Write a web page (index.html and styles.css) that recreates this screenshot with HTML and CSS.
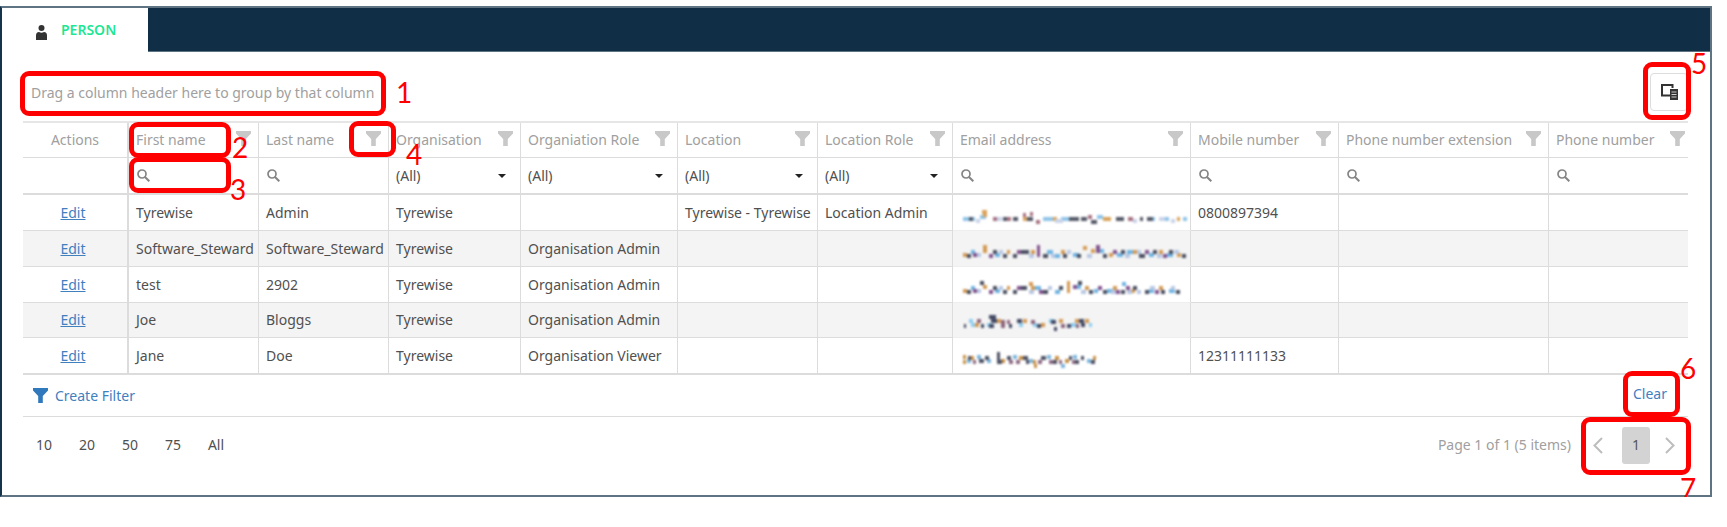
FILE: index.html
```html
<!DOCTYPE html>
<html lang="en">
<head>
	<meta charset="utf-8">
	<title>Person</title>
	<link rel="stylesheet" href="styles.css">
</head>
<body>
	<svg class="sprite" aria-hidden="true">
		<symbol id="funnel" viewBox="0 0 15 15"><path d="M0 0h15v2.6L9.8 8v7H5.2V8L0 2.6z"/></symbol>
		<symbol id="search" viewBox="0 0 13 13"><circle cx="5" cy="5" r="4" fill="none" stroke="currentColor" stroke-width="1.7"/><path d="M8 8l4.3 4.3" stroke="currentColor" stroke-width="2"/></symbol>
		<symbol id="caret" viewBox="0 0 8 4"><path d="M0 0h8L4 4z"/></symbol>
	</svg>

	<div class="panel">
		<div class="tabs">
			<button class="tab" type="button">
				<svg class="person" viewBox="0 0 11 15"><circle cx="5.5" cy="3" r="3"/><path d="M0 15v-4.500q0-3.500 3-3.500 2.500 1.500 5 0 3 0 3 3.500V15z"/></svg>
				PERSON
			</button>
		</div>

		<div class="grid">
			<div class="grouping">
				<span>Drag a column header here to group by that column</span>
				<button class="chooser" type="button" aria-label="Column chooser">
					<svg viewBox="0 0 17 16"><path d="M9 11.500H1V1h10.500v3" fill="none" stroke="#333" stroke-width="2"/><path d="M9 5h8v11H9z" fill="#333"/><path d="M10.500 8h5M10.500 10.500h5M10.500 13h5" stroke="#ccc" stroke-width="1"/></svg>
				</button>
			</div>

			<table>
				<colgroup>
					<col class="c-actions"><col class="c-name"><col class="c-name"><col class="c-org"><col class="c-orgrole"><col class="c-loc"><col class="c-locrole"><col><col class="c-mobile"><col class="c-ext"><col class="c-phone">
				</colgroup>
				<thead>
					<tr>
						<th class="actions">Actions</th>
						<th><div class="head">First name <svg><use href="#funnel"/></svg></div></th>
						<th><div class="head">Last name <svg><use href="#funnel"/></svg></div></th>
						<th><div class="head">Organisation <svg><use href="#funnel"/></svg></div></th>
						<th><div class="head">Organiation Role <svg><use href="#funnel"/></svg></div></th>
						<th><div class="head">Location <svg><use href="#funnel"/></svg></div></th>
						<th><div class="head">Location Role <svg><use href="#funnel"/></svg></div></th>
						<th><div class="head">Email address <svg><use href="#funnel"/></svg></div></th>
						<th><div class="head">Mobile number <svg><use href="#funnel"/></svg></div></th>
						<th><div class="head">Phone number extension <svg><use href="#funnel"/></svg></div></th>
						<th><div class="head">Phone number <svg><use href="#funnel"/></svg></div></th>
					</tr>
					<tr class="filters">
						<td class="actions"></td>
						<td><label class="search"><svg><use href="#search"/></svg><input type="text" aria-label="Filter first name"></label></td>
						<td><label class="search"><svg><use href="#search"/></svg><input type="text" aria-label="Filter last name"></label></td>
						<td><label class="pick"><select aria-label="Filter organisation"><option>(All)</option></select><svg><use href="#caret"/></svg></label></td>
						<td><label class="pick"><select aria-label="Filter organisation role"><option>(All)</option></select><svg><use href="#caret"/></svg></label></td>
						<td><label class="pick"><select aria-label="Filter location"><option>(All)</option></select><svg><use href="#caret"/></svg></label></td>
						<td><label class="pick"><select aria-label="Filter location role"><option>(All)</option></select><svg><use href="#caret"/></svg></label></td>
						<td><label class="search"><svg><use href="#search"/></svg><input type="text" aria-label="Filter email address"></label></td>
						<td><label class="search"><svg><use href="#search"/></svg><input type="text" aria-label="Filter mobile number"></label></td>
						<td><label class="search"><svg><use href="#search"/></svg><input type="text" aria-label="Filter phone extension"></label></td>
						<td><label class="search"><svg><use href="#search"/></svg><input type="text" aria-label="Filter phone number"></label></td>
					</tr>
				</thead>
				<!-- email addresses are masked with a coloured mosaic -->
				<tbody>
					<tr>
						<td class="actions"><a href="#">Edit</a></td><td>Tyrewise</td><td>Admin</td><td>Tyrewise</td><td></td><td>Tyrewise - Tyrewise</td><td>Location Admin</td>
						<td class="email"><svg class="mosaic" viewBox="0 0 226 20">
							<path stroke="#8fc4e8" d="M0 12h12M17 10h6M80 12h12M98 12h10M134 10h6M188 12h4M202 12h4M220 12h4"/>
							<path stroke="#d9a35c" d="M19 5h5M20 8h4M60 12h5M90 12h4M140 12h8M214 12h3"/>
							<path stroke="#555a68" d="M6 12h4M40 12h6M50 12h5M64 12h6M106 12h10M118 12h6M128 15h6M153 12h8M177 12h3M184 12h6"/>
							<path stroke="#a87080" d="M30 12h5M44 12h4M60 8h3M67 7h3M73 15h4M125 10h4M165 12h5"/>
							<path stroke="#c9d3e8" d="M13 14h4M34 12h5M92 14h8M170 14h4M196 12h6M208 14h4"/>
						</svg></td>
						<td>0800897394</td><td></td><td></td>
					</tr>
					<tr>
						<td class="actions"><a href="#">Edit</a></td><td>Software_Steward</td><td>Software_Steward</td><td>Tyrewise</td><td>Organisation Admin</td><td></td><td></td>
						<td class="email"><svg class="mosaic" viewBox="0 0 226 20">
							<path stroke="#6fb4e2" d="M8 9h4M32 12h5M84 9h6M92 13h5M110 12h6M137 8h4M154 12h6M164 9h6M186 12h5M204 12h6"/>
							<path stroke="#d39a54" d="M0 12h4M20 4h4M20 8h4M44 9h3M68 9h4M98 9h4M120 5h4M128 8h4M146 12h4M170 9h4M196 9h4M214 12h4"/>
							<path stroke="#4a4f60" d="M4 13h4M30 9h4M40 13h4M50 13h4M58 9h8M80 13h5M100 13h4M114 13h4M140 13h4M158 9h4M176 13h6M190 9h4M206 9h4M219 13h4"/>
							<path stroke="#83548f" d="M10 12h4M26 13h4M54 9h4M74 4h3M74 8h3M74 12h3M133 4h4M133 8h4M150 9h4M182 9h4M200 13h4"/>
							<path stroke="#b8c8e4" d="M14 12h4M36 9h4M66 13h5M88 13h4M104 9h4M124 13h5M162 13h5M174 9h4M194 13h5M211 9h5"/>
						</svg></td>
						<td></td><td></td><td></td>
					</tr>
					<tr>
						<td class="actions"><a href="#">Edit</a></td><td>test</td><td>2902</td><td>Tyrewise</td><td>Organisation Admin</td><td></td><td></td>
						<td class="email"><svg class="mosaic" viewBox="0 0 226 20">
							<path stroke="#6fb4e2" d="M8 9h4M32 12h5M72 9h6M92 13h5M112 8h6M131 12h4M144 12h6M159 5h4M186 12h5M206 12h6"/>
							<path stroke="#d39a54" d="M0 12h4M20 8h4M44 9h3M66 5h4M68 9h4M104 4h3M104 8h3M104 12h3M122 9h4M150 9h4M168 12h4M196 9h4"/>
							<path stroke="#4a4f60" d="M4 13h4M17 4h4M30 9h4M40 13h4M50 13h4M58 9h6M80 13h5M96 9h4M115 4h4M126 13h4M140 13h4M158 13h4M170 9h4M182 13h4M198 13h4M213 13h4"/>
							<path stroke="#83548f" d="M10 12h4M26 13h4M54 9h4M76 13h4M110 8h4M135 9h4M153 13h4M163 9h4M192 13h4"/>
							<path stroke="#b8c8e4" d="M14 12h4M36 9h4M66 13h5M85 9h4M118 13h5M148 13h5M164 13h5M174 13h4M187 9h5M208 9h4"/>
						</svg></td>
						<td></td><td></td><td></td>
					</tr>
					<tr>
						<td class="actions"><a href="#">Edit</a></td><td>Joe</td><td>Bloggs</td><td>Tyrewise</td><td>Organisation Admin</td><td></td><td></td>
						<td class="email"><svg class="mosaic" viewBox="0 0 226 20">
							<path stroke="#8fcdf0" d="M6 7h4M8 11h4M24 11h4M56 11h4M70 11h4M86 7h5M108 11h5M126 11h3"/>
							<path stroke="#d39a54" d="M12 11h4M34 7h4M60 7h4M78 11h4M96 7h4M112 7h4M122 7h4"/>
							<path stroke="#454b66" d="M1 12h2M18 12h3M26 3h7M28 7h6M26 12h5M46 12h3M54 7h5M74 12h4M88 8h5M91 15h3M104 12h4M116 7h5M118 11h4"/>
							<path stroke="#8f667d" d="M14 7h4M38 8h4M38 12h4M44 8h3M68 8h4M98 12h4M113 12h3"/>
						</svg></td>
						<td></td><td></td><td></td>
					</tr>
					<tr>
						<td class="actions"><a href="#">Edit</a></td><td>Jane</td><td>Doe</td><td>Tyrewise</td><td>Organisation Viewer</td><td></td><td></td>
						<td class="email"><svg class="mosaic" viewBox="0 0 226 20">
							<path stroke="#7cb6dd" d="M4 11h4M14 7h4M24 11h4M50 7h4M66 11h4M84 7h4M98 16h4M110 7h4M124 11h4"/>
							<path stroke="#c99248" d="M0 7h3M0 12h3M8 8h3M38 11h4M56 8h4M70 12h3M71 16h3M92 8h4M102 11h4M130 8h3"/>
							<path stroke="#4f5365" d="M5 8h3M16 11h5M22 8h4M34 4h3M34 8h3M34 12h5M44 8h4M60 8h5M63 12h3M78 8h5M90 12h4M106 8h3M112 12h4M118 8h3M128 12h4"/>
							<path stroke="#8f6a84" d="M10 12h3M46 12h4M53 12h4M75 12h4M86 12h4M96 12h3M109 12h3"/>
						</svg></td>
						<td>12311111133</td><td></td><td></td>
					</tr>
				</tbody>
			</table>

			<div class="filterbar">
				<a href="#"><svg><use href="#funnel"/></svg>Create Filter</a>
				<a href="#" class="clear">Clear</a>
			</div>

			<div class="pager">
				<div class="sizes">
					<button type="button">10</button>
					<button type="button">20</button>
					<button type="button">50</button>
					<button type="button">75</button>
					<button type="button">All</button>
				</div>
				<div class="pages">
					<span>Page 1 of 1 (5 items)</span>
					<button type="button" aria-label="Previous page"><svg viewBox="0 0 10 17"><path d="M9 1L1.500 8.500 9 16"/></svg></button>
					<button type="button" class="current">1</button>
					<button type="button" aria-label="Next page"><svg viewBox="0 0 10 17"><path d="M1 1l7.500 7.500L1 16"/></svg></button>
				</div>
			</div>
		</div>

		<!-- numbered callouts -->
		<div class="callout n1"><b>1</b></div>
		<div class="callout n2"><b>2</b></div>
		<div class="callout n3"><b>3</b></div>
		<div class="callout n4"><b>4</b></div>
		<div class="callout n5"><b>5</b></div>
		<div class="callout n6"><b>6</b></div>
		<div class="callout n7"><b>7</b></div>
	</div>
</body>
</html>
```
FILE: styles.css
```css
* {
	box-sizing: border-box;
}

body {
	margin: 0;
	padding: 6px 15px 0 0;
	background: #fff;
	color: #505050;
	font: 14px/20px "Noto Sans", "Open Sans", sans-serif;
}

button, input, select {
	margin: 0;
	padding: 0;
	border: 0;
	background: none;
	color: inherit;
	font: inherit;
}

a {
	color: #3f80bf;
}

.sprite {
	position: absolute;
	width: 0;
	height: 0;
}

.panel {
	position: relative;
	border: 2px solid #5f7482;
	border-left-color: #15334b;
}

.tabs {
	display: flex;
	height: 44px;
	background: #102f47;
	border-bottom: 1px solid #5f7482;
}

.tab {
	display: flex;
	align-items: center;
	gap: 14px;
	width: 146px;
	height: 44px;
	padding: 0 0 0 34px;
	background: #fff;
	color: #1fe694;
	font-weight: 600;
}

.person {
	width: 11px;
	height: 15px;
	margin-top: 4px;
	fill: #333;
}

.grid {
	padding: 0 22px 22px 21px;
}

.grouping {
	display: flex;
	justify-content: space-between;
	align-items: center;
	height: 69px;
	padding: 10px 0 0 8px;
	color: #a0a0a0;
}

.grouping span {
	margin-top: 2px;
}

.chooser {
	width: 38px;
	height: 38px;
	border: 1px solid #ddd;
	border-radius: 4px;
}

.chooser svg {
	display: block;
	width: 17px;
	height: 16px;
	margin: 0 auto;
}

table {
	width: 100%;
	table-layout: fixed;
	border-collapse: separate;
	border-spacing: 0;
	border-top: 2px solid #e6e6e6;
	border-bottom: 2px solid #dcdcdc;
}

.c-actions { width: 106px; }
.c-name { width: 130px; }
.c-org { width: 132px; }
.c-orgrole { width: 157px; }
.c-loc { width: 140px; }
.c-locrole { width: 135px; }
.c-mobile { width: 148px; }
.c-ext { width: 210px; }
.c-phone { width: 139px; }

th, td {
	height: 36px;
	padding: 0 0 0 7px;
	border-right: 1px solid #dcdcdc;
	border-bottom: 1px solid #dcdcdc;
	text-align: left;
	font-weight: normal;
	white-space: nowrap;
}

th {
	height: 35px;
	color: #a0a0a0;
}

th:last-child, td:last-child {
	border-right: 0;
}

.filters td {
	height: 37px;
	border-bottom-width: 2px;
}

tbody tr:nth-child(even) {
	background: #f4f4f4;
}

tbody tr:nth-child(4) td {
	height: 35px;
}

tbody tr:last-child td {
	border-bottom: 0;
	height: 35px;
}

th.actions, td.actions {
	padding: 0;
	border-right-width: 2px;
	text-align: center;
}

td.actions a {
	margin-right: 4px;
}

.head {
	display: flex;
	justify-content: space-between;
	align-items: center;
	padding-right: 7px;
}

th:last-child .head {
	padding-right: 3px;
}

.head svg, .filterbar svg {
	width: 15px;
	height: 15px;
	fill: #c8c8c8;
}

.head svg {
	margin-top: -3px;
}

.search, .pick {
	display: flex;
	align-items: center;
}

.search svg {
	flex: none;
	width: 13px;
	height: 13px;
	margin-left: 1px;
	color: #858585;
}

.search input {
	width: 100%;
	min-width: 0;
	padding: 0 6px;
}

.pick select {
	flex: 1;
	appearance: none;
}

.pick svg {
	width: 8px;
	height: 4px;
	margin-right: 14px;
	fill: #222;
}

td.email {
	border-bottom-color: #eee;
}

.mosaic {
	display: block;
	width: 226px;
	height: 20px;
	margin: 8px 0 0 3px;
	fill: none;
	stroke-width: 4;
	filter: blur(1px);
}

.filterbar {
	display: flex;
	justify-content: space-between;
	align-items: center;
	height: 42px;
	padding: 0 21px 0 10px;
	border-bottom: 1px solid #dcdcdc;
}

.filterbar a {
	display: flex;
	align-items: center;
	gap: 7px;
	text-decoration: none;
}

.filterbar svg {
	fill: #3079bd;
}

.filterbar .clear {
	margin-bottom: 4px;
}

.pager {
	display: flex;
	justify-content: space-between;
	align-items: center;
	height: 56px;
}

.sizes {
	display: flex;
	padding-left: 7px;
}

.sizes button {
	width: 28px;
	margin-right: 15px;
}

.pages {
	display: flex;
	align-items: center;
	padding-right: 4px;
	color: #a0a0a0;
}

.pages button {
	width: 28px;
	height: 37px;
	margin-left: 6px;
}

.pages span {
	margin-right: 7px;
}

.pages svg {
	display: block;
	width: 10px;
	height: 17px;
	margin: 0 auto;
	fill: none;
	stroke: #bdbdbd;
	stroke-width: 2;
}

.pages .current {
	margin-left: 10px;
	border-radius: 3px;
	background: #d3d3d3;
	color: #555;
}

/* callouts drawn over the grid */
.callout {
	position: absolute;
	border: 5px solid #f00;
	border-radius: 9px;
	pointer-events: none;
}

.callout b {
	position: absolute;
	color: #f00;
	font: 28px/28px Lato, sans-serif;
}

.n1 { left: 18px; top: 63px; width: 366px; height: 45px; }
.n2 { left: 127px; top: 114px; width: 102px; height: 36px; }
.n3 { left: 127px; top: 149px; width: 102px; height: 36px; }
.n4 { left: 347px; top: 113px; width: 47px; height: 36px; }
.n5 { right: 19px; top: 54px; width: 48px; height: 58px; }
.n6 { right: 30px; top: 363px; width: 57px; height: 46px; }
.n7 { right: 19px; top: 409px; width: 110px; height: 58px; }

.n1 b { left: 371px; top: 2px; }
.n2 b { left: 98px; top: 6px; }
.n3 b { left: 96px; top: 13px; }
.n4 b { left: 52px; top: 14px; }
.n5 b { left: 43px; top: -18px; }
.n6 b { left: 52px; top: -22px; }
.n7 b { left: 94px; top: 52px; }
```
